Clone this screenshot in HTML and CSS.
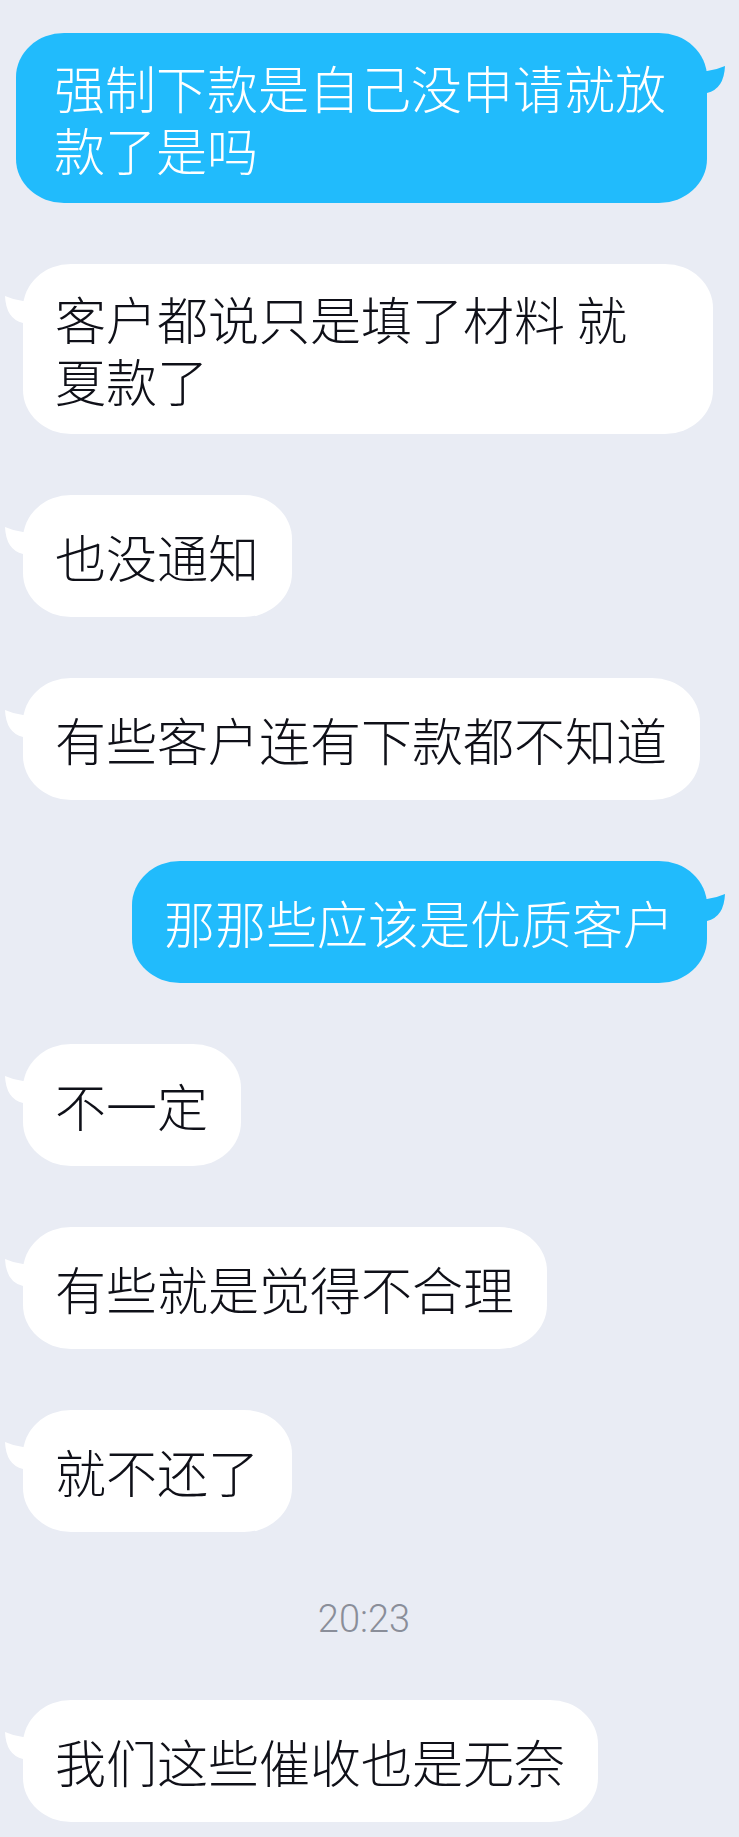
FILE: index.html
```html
<!DOCTYPE html>
<html lang="zh-CN">
<head>
<meta charset="utf-8">
<title>Chat</title>
<link rel="stylesheet" href="styles.css">
</head>
<body>
<div class="chat">
  <div class="msg out">
    <div class="bubble wide">强制下款是自己没申请就放款了是吗<svg class="tail" viewBox="0 0 26 32" width="26" height="32"><path d="M26 7 L20 7 Q11 6 2 2 Q3 25 20 29 L26 29 Z"/></svg></div>
  </div>
  <div class="msg in">
    <div class="bubble full">客户都说只是填了材料 就夏款了<svg class="tail" viewBox="0 0 26 32" width="26" height="32"><path d="M26 7 L20 7 Q11 6 2 2 Q3 25 20 29 L26 29 Z"/></svg></div>
  </div>
  <div class="msg in">
    <div class="bubble">也没通知<svg class="tail" viewBox="0 0 26 32" width="26" height="32"><path d="M26 7 L20 7 Q11 6 2 2 Q3 25 20 29 L26 29 Z"/></svg></div>
  </div>
  <div class="msg in">
    <div class="bubble">有些客户连有下款都不知道<svg class="tail" viewBox="0 0 26 32" width="26" height="32"><path d="M26 7 L20 7 Q11 6 2 2 Q3 25 20 29 L26 29 Z"/></svg></div>
  </div>
  <div class="msg out">
    <div class="bubble">那那些应该是优质客户<svg class="tail" viewBox="0 0 26 32" width="26" height="32"><path d="M26 7 L20 7 Q11 6 2 2 Q3 25 20 29 L26 29 Z"/></svg></div>
  </div>
  <div class="msg in">
    <div class="bubble">不一定<svg class="tail" viewBox="0 0 26 32" width="26" height="32"><path d="M26 7 L20 7 Q11 6 2 2 Q3 25 20 29 L26 29 Z"/></svg></div>
  </div>
  <div class="msg in">
    <div class="bubble">有些就是觉得不合理<svg class="tail" viewBox="0 0 26 32" width="26" height="32"><path d="M26 7 L20 7 Q11 6 2 2 Q3 25 20 29 L26 29 Z"/></svg></div>
  </div>
  <div class="msg in">
    <div class="bubble">就不还了<svg class="tail" viewBox="0 0 26 32" width="26" height="32"><path d="M26 7 L20 7 Q11 6 2 2 Q3 25 20 29 L26 29 Z"/></svg></div>
  </div>
  <div class="time">20:23</div>
  <div class="msg in">
    <div class="bubble">我们这些催收也是无奈<svg class="tail" viewBox="0 0 26 32" width="26" height="32"><path d="M26 7 L20 7 Q11 6 2 2 Q3 25 20 29 L26 29 Z"/></svg></div>
  </div>
</div>
</body>
</html>
```
FILE: styles.css
```css
html, body {
  margin: 0;
  padding: 0;
  background: #e9ecf4;
}

.chat {
  display: flex;
  flex-direction: column;
  gap: 61px;
  padding: 33px 0 15px;
  font-family: "Noto Sans CJK SC", "Noto Sans", sans-serif;
  font-weight: 300;
}

.msg {
  display: flex;
}

.msg.in {
  justify-content: flex-start;
  padding-left: 23px;
}

.msg.out {
  justify-content: flex-end;
  padding-right: 32px;
}

.bubble {
  position: relative;
  box-sizing: border-box;
  max-width: 691px;
  min-height: 122px;
  padding: 23px 33px 23px 32px;
  border-radius: 48px / 44px;
  font-size: 51px;
  line-height: 62px;
  display: flex;
  align-items: center;
}

.bubble.wide {
  padding-left: 38px;
  padding-right: 30px;
}

.bubble.full {
  width: 690px;
  display: block;
  padding-right: 40px;
}

.in .bubble {
  background: #ffffff;
  color: #0f1018;
}

.out .bubble {
  background: #21bbfc;
  color: #ffffff;
}

.tail {
  position: absolute;
  top: 30px;
}

.in .tail {
  left: -20px;
  fill: #ffffff;
}

.out .tail {
  right: -20px;
  top: 31px;
  transform: scaleX(-1);
  fill: #21bbfc;
}

.time {
  text-align: center;
  padding: 6px 11px 0 0;
  font-family: Roboto, "Liberation Sans", sans-serif;
  font-size: 38px;
  line-height: 40px;
  color: #8a8e99;
}
```
